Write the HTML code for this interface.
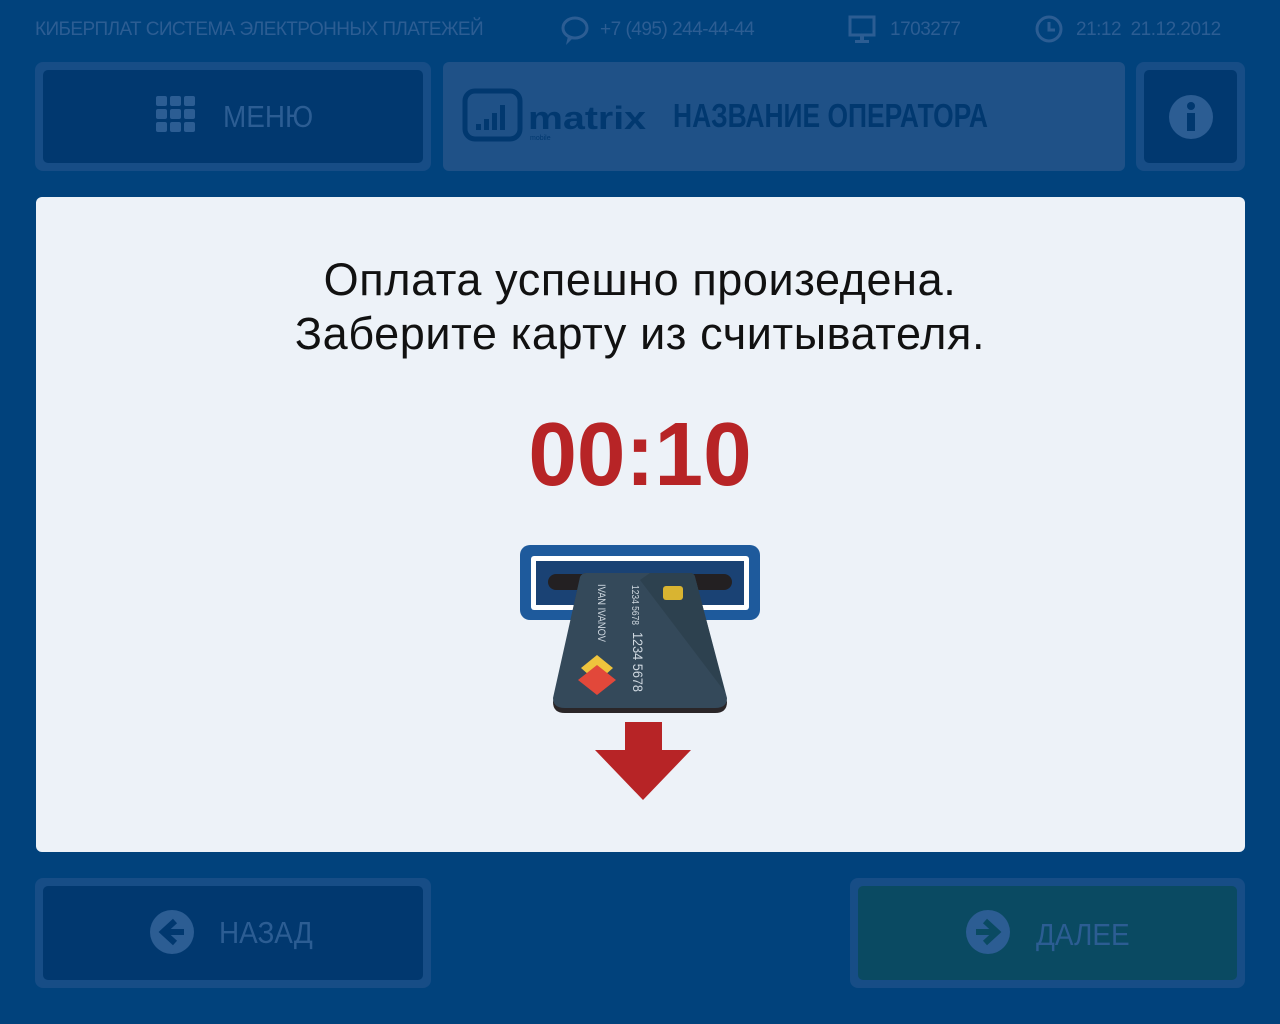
<!DOCTYPE html>
<html><head><meta charset="utf-8"><style>
body{margin:0;width:1280px;height:1024px;background:#01427c;font-family:"Liberation Sans",sans-serif;position:relative;overflow:hidden}
.a{position:absolute}
.t{color:#2c5d93;font-size:19px;top:19px;letter-spacing:-0.5px}
.ob{position:absolute;background:#174d86;border-radius:8px}
.ib{position:absolute;left:8px;top:8px;right:8px;bottom:8px;background:#01386f;border-radius:5px}
.bt{color:#2c5d93;font-size:31px;position:absolute;transform:scaleX(.9);transform-origin:left}
</style></head><body>
<div class="a t" style="left:35px;white-space:nowrap;letter-spacing:-0.6px;font-size:19px;top:19px">КИБЕРПЛАТ СИСТЕМА ЭЛЕКТРОННЫХ ПЛАТЕЖЕЙ</div>
<svg class="a" style="left:560px;top:15px" width="30" height="32"><ellipse cx="15" cy="13" rx="12" ry="10" fill="none" stroke="#2c5d93" stroke-width="3"/><path d="M8 21 L6 30 L14 22Z" fill="#2c5d93"/></svg>
<div class="a t" style="left:600px">+7 (495) 244-44-44</div>
<svg class="a" style="left:848px;top:15px" width="30" height="30"><rect x="2" y="2" width="24" height="18" fill="none" stroke="#2c5d93" stroke-width="3"/><rect x="12" y="20" width="4" height="5" fill="#2c5d93"/><rect x="7" y="25" width="14" height="3" fill="#2c5d93"/></svg>
<div class="a t" style="left:890px">1703277</div>
<svg class="a" style="left:1034px;top:14px" width="32" height="32"><circle cx="15" cy="15" r="12" fill="none" stroke="#2c5d93" stroke-width="3"/><path d="M15 8V16H21" fill="none" stroke="#2c5d93" stroke-width="3"/></svg>
<div class="a t" style="left:1076px">21:12&nbsp; 21.12.2012</div>

<div class="ob" style="left:35px;top:62px;width:396px;height:109px"><div class="ib"></div></div>
<svg class="a" style="left:156px;top:96px" width="42" height="38" fill="#2c5d93"><rect x="0" y="0" width="11" height="10" rx="2"/><rect x="14" y="0" width="11" height="10" rx="2"/><rect x="28" y="0" width="11" height="10" rx="2"/><rect x="0" y="13" width="11" height="10" rx="2"/><rect x="14" y="13" width="11" height="10" rx="2"/><rect x="28" y="13" width="11" height="10" rx="2"/><rect x="0" y="26" width="11" height="10" rx="2"/><rect x="14" y="26" width="11" height="10" rx="2"/><rect x="28" y="26" width="11" height="10" rx="2"/></svg>
<div class="bt" style="left:223px;top:99px">МЕНЮ</div>

<div class="a" style="left:443px;top:62px;width:682px;height:109px;background:#1f5187;border-radius:6px"></div>
<svg class="a" style="left:462px;top:88px" width="190" height="56"><rect x="3" y="3" width="55" height="48" rx="10" fill="none" stroke="#01386f" stroke-width="5"/><g fill="#01386f"><rect x="14" y="36" width="5" height="6"/><rect x="22" y="31" width="5" height="11"/><rect x="30" y="25" width="5" height="17"/><rect x="38" y="17" width="5" height="25"/></g><text x="66" y="41" font-family="Liberation Sans" font-weight="bold" font-size="32" fill="#01386f" textLength="118" lengthAdjust="spacingAndGlyphs">matrix</text><text x="68" y="52" font-size="7" fill="#01386f" font-family="Liberation Sans">mobile</text></svg>
<div class="a" style="left:673px;top:97px;font-size:33px;font-weight:bold;color:#01386f;transform:scaleX(.8);transform-origin:left;white-space:nowrap">НАЗВАНИЕ ОПЕРАТОРА</div>

<div class="ob" style="left:1136px;top:62px;width:109px;height:109px"><div class="ib"></div></div>
<svg class="a" style="left:1168px;top:94px" width="46" height="46"><circle cx="23" cy="23" r="22" fill="#2c5d93"/><circle cx="23" cy="12" r="4" fill="#01386f"/><rect x="19" y="19" width="8" height="18" fill="#01386f"/></svg>

<div class="a" style="left:36px;top:197px;width:1209px;height:655px;background:#edf2f8;border-radius:6px"></div>
<div class="a" style="left:0;width:1280px;top:253px;text-align:center;font-size:45px;line-height:54px;color:#111;letter-spacing:0.6px">Оплата успешно произедена.<br>Заберите карту из считывателя.</div>
<div class="a" style="left:0;width:1280px;top:404px;text-align:center;font-size:90px;font-weight:bold;color:#b72426;transform:scaleX(.97)">00:10</div>

<svg class="a" style="left:500px;top:530px" width="280" height="280">
<rect x="20" y="15" width="240" height="75" rx="10" fill="#1e5a9c"/>
<rect x="31" y="26" width="218" height="54" rx="3" fill="#fff"/>
<rect x="36" y="31" width="208" height="44" fill="#1a4274"/>
<rect x="48" y="44" width="184" height="16" rx="8" fill="#232022"/>
<path d="M80 47 Q82 43 86 43 L190 43 Q194 43 195 47 L227 172 Q227 183 215 183 L65 183 Q53 183 53 172 Z" fill="#2a2628"/>
<path d="M80 47 Q82 43 86 43 L190 43 Q194 43 195 47 L227 168 Q227 178 215 178 L65 178 Q53 178 53 168 Z" fill="#34495a"/>
<path d="M190 43 Q194 43 195 47 L225 162 L140 50 L150 43Z" fill="#2d414f"/>
<rect x="163" y="56" width="20" height="14" rx="3" fill="#d9b431"/>
<path d="M97 125 L113 138 L97 152 L81 138Z" fill="#efc43d"/>
<path d="M97 135 L116 150 L97 165 L78 150Z" fill="#e2483a"/>
<g fill="#cfd8e0" font-family="Liberation Sans" transform="rotate(90)">
<text x="55" y="-132" font-size="10" textLength="40" lengthAdjust="spacingAndGlyphs">1234  5678</text>
<text x="102" y="-133" font-size="14" textLength="60" lengthAdjust="spacingAndGlyphs">1234  5678</text>
<text x="54" y="-98" font-size="11" textLength="58" lengthAdjust="spacingAndGlyphs">IVAN IVANOV</text>
</g>
<rect x="125" y="192" width="37" height="30" fill="#b72426"/>
<path d="M95 220 L191 220 L143 270Z" fill="#b72426"/>
</svg>

<div class="ob" style="left:35px;top:878px;width:396px;height:110px"><div class="ib"></div></div>
<svg class="a" style="left:150px;top:910px" width="46" height="46"><circle cx="22" cy="22" r="22" fill="#2c5d93"/><path d="M25 11 L13 22 L25 33 M13 22 H34" fill="none" stroke="#01386f" stroke-width="6"/></svg>
<div class="bt" style="left:219px;top:915px">НАЗАД</div>

<div class="ob" style="left:850px;top:878px;width:395px;height:110px"><div class="ib" style="background:#0a4a62"></div></div>
<svg class="a" style="left:966px;top:910px" width="46" height="46"><circle cx="22" cy="22" r="22" fill="#2c5d93"/><path d="M19 11 L31 22 L19 33 M31 22 H10" fill="none" stroke="#0a4a62" stroke-width="6"/></svg>
<div class="bt" style="left:1036px;top:917px">ДАЛЕЕ</div>
</body></html>
